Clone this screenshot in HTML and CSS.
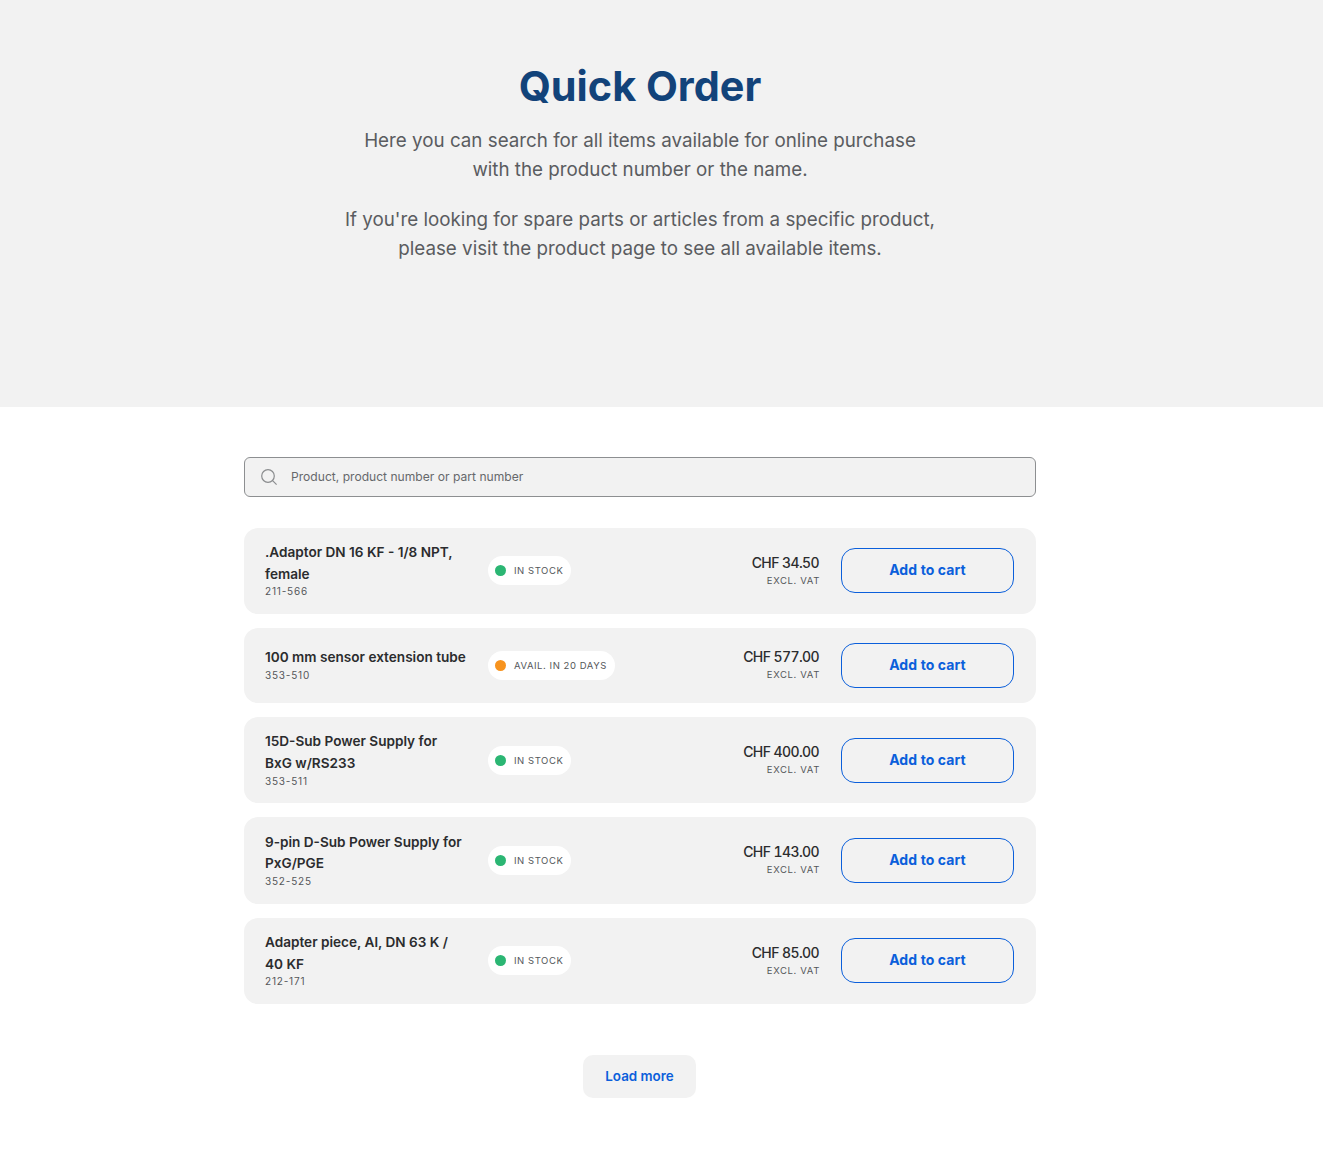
FILE: index.html
```html
<!DOCTYPE html>
<html lang="en">
<head>
    <meta charset="UTF-8">
    <meta name="viewport" content="width=device-width, initial-scale=1.0">
    <title>Quick Order</title>
    <link rel="stylesheet" href="styles.css">
</head>
<body>
    <section class="hero">
        <div class="hero-inner">
            <h1>Quick Order</h1>
            <p>Here you can search for all items available for online purchase<br>with the product number or the name.</p>
            <p>If you're looking for spare parts or articles from a specific product,<br>please visit the product page to see all available items.</p>
        </div>
    </section>

    <main class="page">
        <div class="container">
            <div class="search">
                <svg class="search-icon" width="18" height="18" viewBox="0 0 18 18" fill="none" stroke="#8a8c8e" stroke-width="1.2">
                    <circle cx="8" cy="8" r="6.3"/>
                    <path d="M12.6 12.6 L16.6 16.6"/>
                </svg>
                <input type="text" placeholder="Product, product number or part number">
            </div>

            <div class="rows">
                <div class="row">
                    <div class="info">
                        <div class="name">.Adaptor DN 16 KF - 1/8 NPT,<br>female</div>
                        <div class="sku">211-566</div>
                    </div>
                    <div class="status"><span class="dot green"></span>IN STOCK</div>
                    <div class="price">
                        <div class="amount">CHF 34.50</div>
                        <div class="vat">EXCL. VAT</div>
                    </div>
                    <button class="add">Add to cart</button>
                </div>
                <div class="row">
                    <div class="info">
                        <div class="name">100 mm sensor extension tube</div>
                        <div class="sku">353-510</div>
                    </div>
                    <div class="status"><span class="dot orange"></span>AVAIL. IN 20 DAYS</div>
                    <div class="price">
                        <div class="amount">CHF 577.00</div>
                        <div class="vat">EXCL. VAT</div>
                    </div>
                    <button class="add">Add to cart</button>
                </div>
                <div class="row">
                    <div class="info">
                        <div class="name">15D-Sub Power Supply for<br>BxG w/RS233</div>
                        <div class="sku">353-511</div>
                    </div>
                    <div class="status"><span class="dot green"></span>IN STOCK</div>
                    <div class="price">
                        <div class="amount">CHF 400.00</div>
                        <div class="vat">EXCL. VAT</div>
                    </div>
                    <button class="add">Add to cart</button>
                </div>
                <div class="row">
                    <div class="info">
                        <div class="name">9-pin D-Sub Power Supply for<br>PxG/PGE</div>
                        <div class="sku">352-525</div>
                    </div>
                    <div class="status"><span class="dot green"></span>IN STOCK</div>
                    <div class="price">
                        <div class="amount">CHF 143.00</div>
                        <div class="vat">EXCL. VAT</div>
                    </div>
                    <button class="add">Add to cart</button>
                </div>
                <div class="row">
                    <div class="info">
                        <div class="name">Adapter piece, Al, DN 63 K /<br>40 KF</div>
                        <div class="sku">212-171</div>
                    </div>
                    <div class="status"><span class="dot green"></span>IN STOCK</div>
                    <div class="price">
                        <div class="amount">CHF 85.00</div>
                        <div class="vat">EXCL. VAT</div>
                    </div>
                    <button class="add">Add to cart</button>
                </div>
            </div>

            <div class="more">
                <button class="load">Load more</button>
            </div>
        </div>
    </main>
</body>
</html>
```
FILE: styles.css
```css
* {
    box-sizing: border-box;
}
body {
    margin: 0;
    height: 1150px;
    background: #fff;
    font-family: "Inter", "Liberation Sans", sans-serif;
    color: #2b2c2e;
}
.hero {
    height: 407px;
    padding-top: 59px;
    background: #f2f2f2;
}
.hero-inner, .page {
    width: 1280px;
}
.hero-inner {
    text-align: center;
}
h1 {
    margin: 0 0 13px;
    font-size: 41.4px;
    line-height: 54px;
    font-weight: 700;
    color: #12437a;
}
.hero p {
    margin: 0 0 21px;
    font-size: 18.8px;
    line-height: 29px;
    color: #5a5c60;
}
.container {
    width: 792px;
    margin: 0 auto;
    padding-top: 50px;
}
.search {
    display: flex;
    align-items: center;
    gap: 13px;
    height: 40px;
    padding: 0 15px;
    background: #f2f2f2;
    border: 1px solid #8d8f91;
    border-radius: 6px;
}
.search input {
    flex: 1;
    padding: 0 0 2px;
    border: none;
    outline: none;
    background: none;
    font-family: inherit;
    font-size: 12.1px;
}
.search input::placeholder {
    color: #66686b;
    opacity: 1;
}
.rows {
    display: flex;
    flex-direction: column;
    gap: 14.1px;
    margin-top: 30.6px;
}
.row {
    display: flex;
    align-items: center;
    padding: 14.95px 22px 14.95px 21px;
    background: #f2f2f2;
    border-radius: 14px;
}
.info {
    width: 223px;
    flex-shrink: 0;
}
.name {
    margin-top: -0.5px;
    font-size: 13.6px;
    line-height: 21.6px;
    font-weight: 600;
}
.sku {
    font-size: 10px;
    line-height: 12px;
    margin-bottom: 1.7px;
    letter-spacing: 0.8px;
    color: #55575a;
}
.status {
    display: flex;
    align-items: center;
    height: 29px;
    padding: 0 8px 0 7px;
    background: #fff;
    border-radius: 15px;
    font-size: 9.5px;
    letter-spacing: 0.55px;
    color: #55575a;
}
.dot {
    width: 11px;
    height: 11px;
    margin-right: 8px;
    border-radius: 50%;
}
.green {
    background: #2bb673;
}
.orange {
    background: #f7931e;
}
.price {
    margin-left: auto;
    padding-top: 0.6px;
    text-align: right;
}
.amount {
    font-size: 14px;
    line-height: 18px;
    font-weight: 500;
    letter-spacing: -0.6px;
    font-variant-numeric: tabular-nums;
}
.vat {
    margin: 1px -1px 0 0;
    font-size: 9.5px;
    line-height: 16px;
    letter-spacing: 0.65px;
    color: #55575a;
}
.add {
    width: 173px;
    height: 45px;
    margin-left: 22px;
    padding-bottom: 3px;
    background: none;
    border: 1px solid #0b5fdb;
    border-radius: 14px;
    font-family: inherit;
    font-size: 14px;
    font-weight: 700;
    letter-spacing: 0.1px;
    color: #0b5fdb;
}
.more {
    display: flex;
    justify-content: center;
    margin-top: 50.9px;
}
.load {
    width: 113px;
    height: 43px;
    margin-right: 1px;
    background: #f2f2f2;
    border: none;
    border-radius: 10px;
    font-family: inherit;
    font-size: 13.4px;
    font-weight: 600;
    color: #0b5fdb;
}
```
